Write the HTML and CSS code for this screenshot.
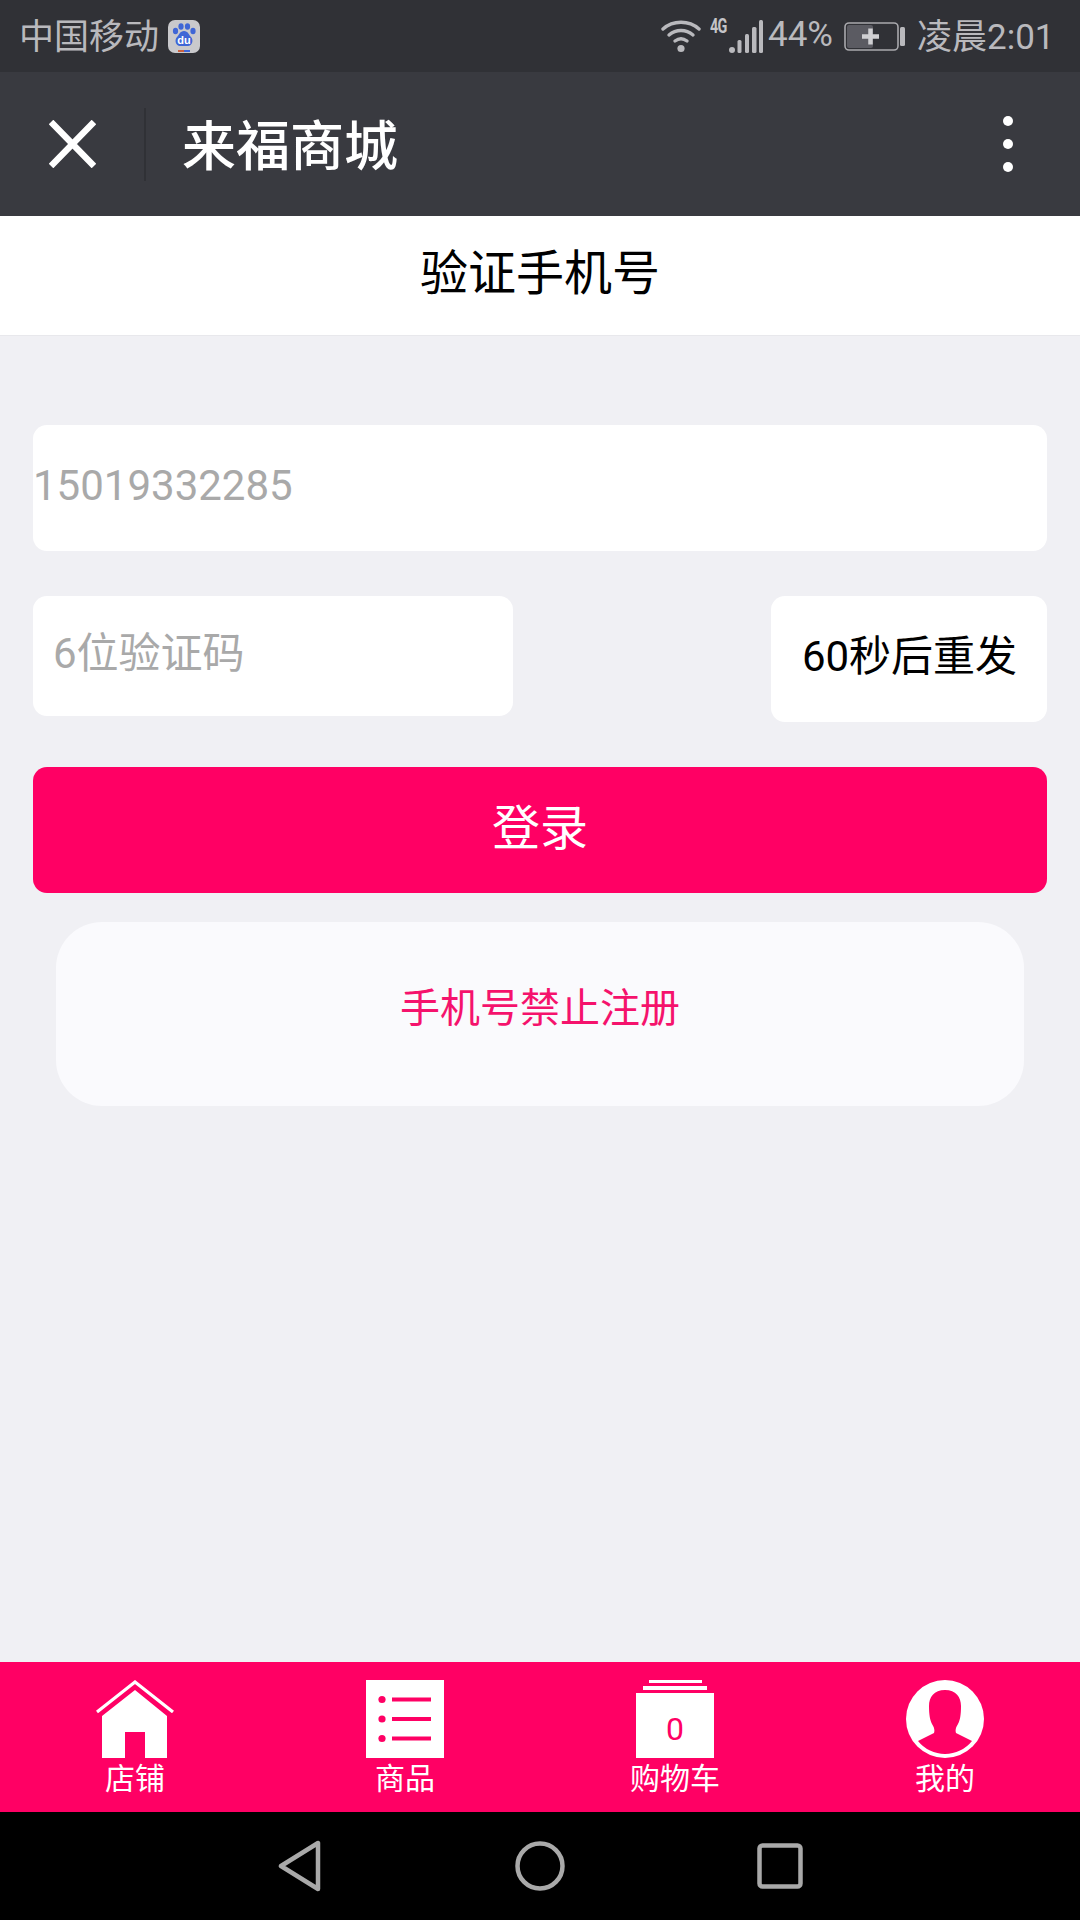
FILE: index.html
```html
<!DOCTYPE html>
<html lang="zh-CN">
<head>
<meta charset="utf-8">
<title>验证手机号</title>
<link rel="stylesheet" href="styles.css">
</head>
<body>
<div class="phone">
  <div class="status">
    <span class="status-text carrier">中国移动</span>
    <svg class="baidu" viewBox="0 0 32 33">
      <rect width="32" height="33" rx="7" fill="#c9c9cc"/>
      <ellipse cx="7.5" cy="11" rx="2.6" ry="3.2" fill="#3f66d6"/>
      <ellipse cx="13" cy="6.5" rx="2.6" ry="3.2" fill="#3f66d6"/>
      <ellipse cx="19.5" cy="6.5" rx="2.6" ry="3.2" fill="#3f66d6"/>
      <ellipse cx="25" cy="11" rx="2.6" ry="3.2" fill="#3f66d6"/>
      <path d="M16 11c4 0 5 4 7 6 3 3 1 9-3 9h-8c-4 0-6-6-3-9 2-2 3-6 7-6z" fill="#3f66d6"/>
      <text x="16" y="24" class="baidu-du">du</text>
      <rect x="10" y="30" width="6" height="2" fill="#c9603f"/>
      <rect x="16" y="30" width="6" height="2" fill="#3f66d6"/>
    </svg>
    <svg class="wifi" viewBox="0 0 40 34" fill="none" stroke="#b9b9bd" stroke-width="3.4" stroke-linecap="round">
      <path d="M2 10C12 1 28 1 38 10"/>
      <path d="M8 16C15 10 25 10 32 16"/>
      <path d="M14 22C18 19 22 19 26 22"/>
      <circle cx="20" cy="29.5" r="3.6" fill="#b9b9bd" stroke="none"/>
    </svg>
    <span class="net">4G</span>
    <svg class="signal" viewBox="0 0 34 33" fill="#b9b9bd">
      <circle cx="3" cy="30" r="3"/>
      <rect x="8.500" y="20" width="4" height="13" rx="1.500"/>
      <rect x="16" y="14" width="4" height="19" rx="1.500"/>
      <rect x="23" y="7" width="4.500" height="26" rx="1.500"/>
      <rect x="30" y="0" width="4" height="33" rx="1.500"/>
    </svg>
    <span class="status-text pct">44%</span>
    <svg class="battery" viewBox="0 0 61 29">
      <rect x="1" y="1" width="53" height="27" rx="4" fill="none" stroke="#a9a9ad" stroke-width="1.600"/>
      <rect x="3" y="3" width="26" height="23" rx="2" fill="#5b5b62"/>
      <path d="M18 14.500h17M26.500 6.500v16" stroke="#cfcfd2" stroke-width="4.500"/>
      <rect x="56" y="5" width="5" height="19" rx="1.500" fill="#b9b9bd"/>
    </svg>
    <span class="status-text clock">凌晨2:01</span>
  </div>

  <div class="navbar">
    <svg class="close" viewBox="0 0 47 48" stroke="#fff" stroke-width="6.500"><path d="M2 2l43 44M45 2L2 46"/></svg>
    <span class="nav-rule"></span>
    <span class="nav-title">来福商城</span>
    <span class="menu"><i class="dot"></i><i class="dot"></i><i class="dot"></i></span>
  </div>

  <div class="titlebar">验证手机号</div>

  <main class="content">
    <div class="field phone-field">15019332285</div>
    <div class="code-row">
      <div class="field code-field">6位验证码</div>
      <div class="resend">60秒后重发</div>
    </div>
    <div class="login">登录</div>
    <div class="notice">手机号禁止注册</div>
  </main>

  <nav class="tabs">
    <div class="tab">
      <svg class="tab-icon" viewBox="0 0 78 78">
        <path d="M1 32L39 2l38 30" fill="none" stroke="#fff" stroke-width="3.200"/>
        <path d="M39 10L71 36v42H49V52H29v26H6V36z" fill="#fff"/>
      </svg>
      <span class="tab-label">店铺</span>
    </div>
    <div class="tab">
      <svg class="tab-icon" viewBox="0 0 78 78">
        <rect width="78" height="78" fill="#fff"/>
        <g fill="#ff0064">
          <circle cx="16" cy="19.500" r="3.600"/><circle cx="16" cy="39" r="3.600"/><circle cx="16" cy="58.500" r="3.600"/>
          <rect x="26" y="17.500" width="39" height="4"/><rect x="26" y="37" width="39" height="4"/><rect x="26" y="56.500" width="39" height="4"/>
        </g>
      </svg>
      <span class="tab-label">商品</span>
    </div>
    <div class="tab">
      <div class="cart">
        <span class="cart-line short"></span>
        <span class="cart-line long"></span>
        <span class="cart-box">0</span>
      </div>
      <span class="tab-label">购物车</span>
    </div>
    <div class="tab">
      <svg class="tab-icon" viewBox="0 0 78 78">
        <circle cx="39" cy="39" r="39" fill="#fff"/>
        <path d="M39 10C28 10 23 17 23 26c0 9 1 14 3 18 2 3 3 6 2 9L12 61A34.500 34.500 0 0 0 66 61L50 53c-1-3 0-6 2-9 2-4 3-9 3-18 0-9-5-16-16-16z" fill="#ff0064"/>
      </svg>
      <span class="tab-label">我的</span>
    </div>
  </nav>

  <div class="sysnav">
    <svg class="sys-back" viewBox="0 0 44 52" fill="none" stroke="#a9a9a9" stroke-width="4.500" stroke-linejoin="round"><path d="M3 26L40 3v46z"/></svg>
    <svg class="sys-home" viewBox="0 0 50 50" fill="none" stroke="#a9a9a9" stroke-width="4.500"><circle cx="25" cy="25" r="22.500"/></svg>
    <svg class="sys-recent" viewBox="0 0 46 46" fill="none" stroke="#a9a9a9" stroke-width="4.500"><rect x="2.500" y="2.500" width="41" height="41" rx="3"/></svg>
  </div>
</div>
</body>
</html>
```

FILE: styles.css
```css
* { box-sizing: border-box; }
html, body { margin: 0; padding: 0; }
body {
  width: 1080px;
  height: 1920px;
  overflow: hidden;
  font-family: Roboto, "Noto Sans CJK SC", sans-serif;
}
.phone {
  display: flex;
  flex-direction: column;
  width: 1080px;
  height: 1920px;
  background: #f0f0f4;
}

/* status bar */
.status {
  display: flex;
  align-items: center;
  height: 72px;
  padding: 3px 0 0 19px;
  background: #303136;
  flex: none;
}
.status-text {
  font-size: 35px;
  line-height: 40px;
  color: #b9b9bd;
}
.carrier { width: 149px; margin-top: 1px; }
.baidu { width: 32px; height: 33px; margin-right: 461px; margin-top: -2px; }
.baidu-du {
  font: 700 11px "Liberation Sans", sans-serif;
  fill: #fff;
  text-anchor: middle;
}
.wifi { width: 40px; height: 34px; margin-top: -3px; }
.net {
  align-self: flex-start;
  width: 18px;
  margin: 13px 0 0 9px;
  font: 700 20px/20px Roboto, sans-serif;
  letter-spacing: -1px;
  white-space: nowrap;
  color: #c4c4c8;
  transform: scaleX(.72);
  transform-origin: left center;
}
.signal { width: 34px; height: 33px; margin: -3px 0 0 1px; }
.pct { width: 68px; margin: -6px 0 0 5px; }
.battery { width: 61px; height: 29px; margin: -3px 0 0 8px; }
.clock { margin: 1px 0 0 12px; white-space: nowrap; }

/* wechat style nav */
.navbar {
  display: flex;
  align-items: center;
  height: 144px;
  padding: 0 67px 0 49px;
  background: #393a40;
  flex: none;
}
.close { width: 47px; height: 48px; }
.nav-rule {
  width: 2px;
  height: 73px;
  margin: 0 36px 0 48px;
  background: #303136;
}
.nav-title {
  margin-top: 8px;
  font-size: 54px;
  line-height: 60px;
  font-weight: 500;
  color: #fff;
}
.menu {
  display: flex;
  flex-direction: column;
  gap: 13px;
  margin-left: auto;
}
.dot {
  display: block;
  width: 10px;
  height: 10px;
  border-radius: 50%;
  background: #fff;
}

.titlebar {
  height: 120px;
  padding-bottom: 13px;
  display: flex;
  align-items: center;
  justify-content: center;
  background: #fff;
  border-bottom: 1px solid #e8e8ec;
  font-size: 48px;
  color: #000;
  flex: none;
}

/* form */
.content {
  flex: 1;
  padding: 89px 33px 0;
  display: flex;
  flex-direction: column;
}
.field {
  display: flex;
  align-items: center;
  background: #fff;
  border-radius: 14px;
  font-size: 42px;
  color: #a9a9a9;
}
.phone-field { height: 126px; padding-bottom: 6px; }
.code-row {
  display: flex;
  align-items: flex-start;
  justify-content: space-between;
  margin-top: 45px;
}
.code-field { width: 480px; height: 120px; padding: 0 0 14px 20px; }
.resend {
  width: 276px;
  height: 126px;
  padding: 0 0 13px 1px;
  display: flex;
  align-items: center;
  justify-content: center;
  background: #fff;
  border-radius: 14px;
  font-size: 42px;
  color: #000;
}
.login {
  height: 126px;
  margin-top: 45px;
  padding-bottom: 12px;
  display: flex;
  align-items: center;
  justify-content: center;
  border-radius: 14px;
  background: #ff0064;
  font-size: 48px;
  color: #fff;
}
.notice {
  height: 184px;
  margin: 29px 23px 0;
  padding-bottom: 18px;
  display: flex;
  align-items: center;
  justify-content: center;
  border-radius: 46px;
  background: #fafafd;
  font-size: 40px;
  color: #f5126c;
}

/* tabs */
.tabs {
  display: grid;
  grid-template-columns: repeat(4, 1fr);
  height: 150px;
  padding-top: 18px;
  background: #ff0064;
  flex: none;
}
.tab {
  display: flex;
  flex-direction: column;
  align-items: center;
}
.tab-icon { width: 78px; height: 78px; display: block; }
.tab-label {
  font-size: 30px;
  line-height: 42px;
  color: #fff;
}
.cart {
  display: flex;
  flex-direction: column;
  align-items: center;
  width: 78px;
  height: 78px;
}
.cart-line { display: block; background: #fff; }
.cart-line.short { width: 53px; height: 3px; }
.cart-line.long { width: 64px; height: 4px; margin-top: 3px; }
.cart-box {
  display: flex;
  align-items: center;
  justify-content: center;
  width: 78px;
  height: 65px;
  margin-top: 3px;
  padding-top: 6px;
  background: #fff;
  font-size: 32px;
  color: #ff0064;
}

/* system navigation */
.sysnav {
  display: flex;
  align-items: center;
  height: 108px;
  padding-left: 278px;
  background: #000;
  flex: none;
}
.sys-back { width: 44px; height: 52px; }
.sys-home { width: 50px; height: 50px; margin-left: 193px; }
.sys-recent { width: 46px; height: 46px; margin-left: 192px; }
```
